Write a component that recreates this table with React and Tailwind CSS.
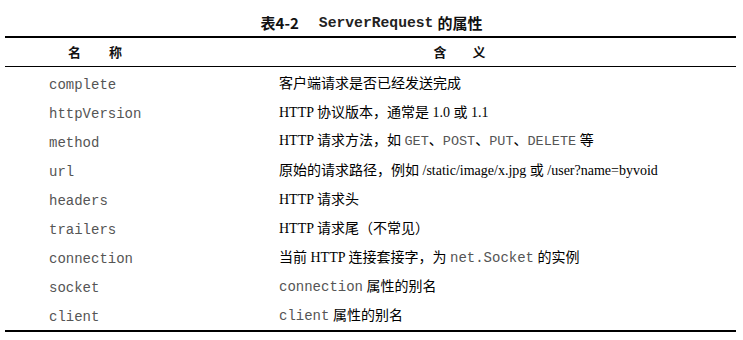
const mono = "font-['Liberation_Mono','Courier_New',monospace]";
const serif = "font-['Liberation_Serif','Noto_Sans_CJK_SC',serif]";

function Code({ children, size = 'text-[14px]' }) {
  return <span className={`${mono} ${size} text-[#555]`}>{children}</span>;
}

const rows = [
  { name: 'complete', desc: <>客户端请求是否已经发送完成</> },
  { name: 'httpVersion', desc: <>HTTP 协议版本，通常是 1.0 或 1.1</> },
  {
    name: 'method',
    desc: (
      <>
        HTTP 请求方法，如 <Code size="text-[13.5px]">GET</Code>、<Code size="text-[13.5px]">POST</Code>、
        <Code size="text-[13.5px]">PUT</Code>、<Code size="text-[13.5px]">DELETE</Code> 等
      </>
    ),
  },
  { name: 'url', desc: <>原始的请求路径，例如 /static/image/x.jpg 或 /user?name=byvoid</> },
  { name: 'headers', desc: <>HTTP 请求头</> },
  { name: 'trailers', desc: <>HTTP 请求尾（不常见）</> },
  {
    name: 'connection',
    desc: (
      <>
        当前 HTTP 连接套接字，为 <Code>net.Socket</Code> 的实例
      </>
    ),
  },
  {
    name: 'socket',
    desc: (
      <>
        <Code>connection</Code> 属性的别名
      </>
    ),
  },
  {
    name: 'client',
    desc: (
      <>
        <Code>client</Code> 属性的别名
      </>
    ),
  },
];

export default function App() {
  return (
    <div className="w-[743px] h-[340px] bg-white px-[5px] text-[#111]">
      <div className="h-[36px] pt-[10px] flex justify-center items-center">
        <div className="flex items-center h-[18px] leading-[18px]">
          <span className="font-['Noto_Sans_CJK_SC',sans-serif] text-[15px] font-bold">表4-2</span>
          <span className={`${mono} text-[14.7px] font-bold ml-[20px] text-[#222]`}>ServerRequest</span>
          <span className="font-['Noto_Sans_CJK_SC',sans-serif] text-[15px] font-bold ml-[4px]">的属性</span>
        </div>
      </div>

      <div className="border-t-2 border-b-2 border-black w-[731px]">
        <div className="grid grid-cols-[178px_553px] h-[29px] border-b border-black items-center font-['Noto_Sans_CJK_SC',sans-serif] text-[13px] font-bold">
          <div className="flex justify-center gap-[28px] pl-[2px]">
            <span>名</span>
            <span>称</span>
          </div>
          <div className="flex justify-center gap-[26px]">
            <span>含</span>
            <span>义</span>
          </div>
        </div>
        <div className="pt-[2px]">
          {rows.map((r) => (
            <div key={r.name} className="grid grid-cols-[178px_553px] h-[29px] items-center">
              <div className="pl-[44px]">
                <Code>{r.name}</Code>
              </div>
              <div className={`pl-[96px] ${serif} text-[14px] text-black whitespace-nowrap`}>{r.desc}</div>
            </div>
          ))}
        </div>
      </div>
    </div>
  );
}
